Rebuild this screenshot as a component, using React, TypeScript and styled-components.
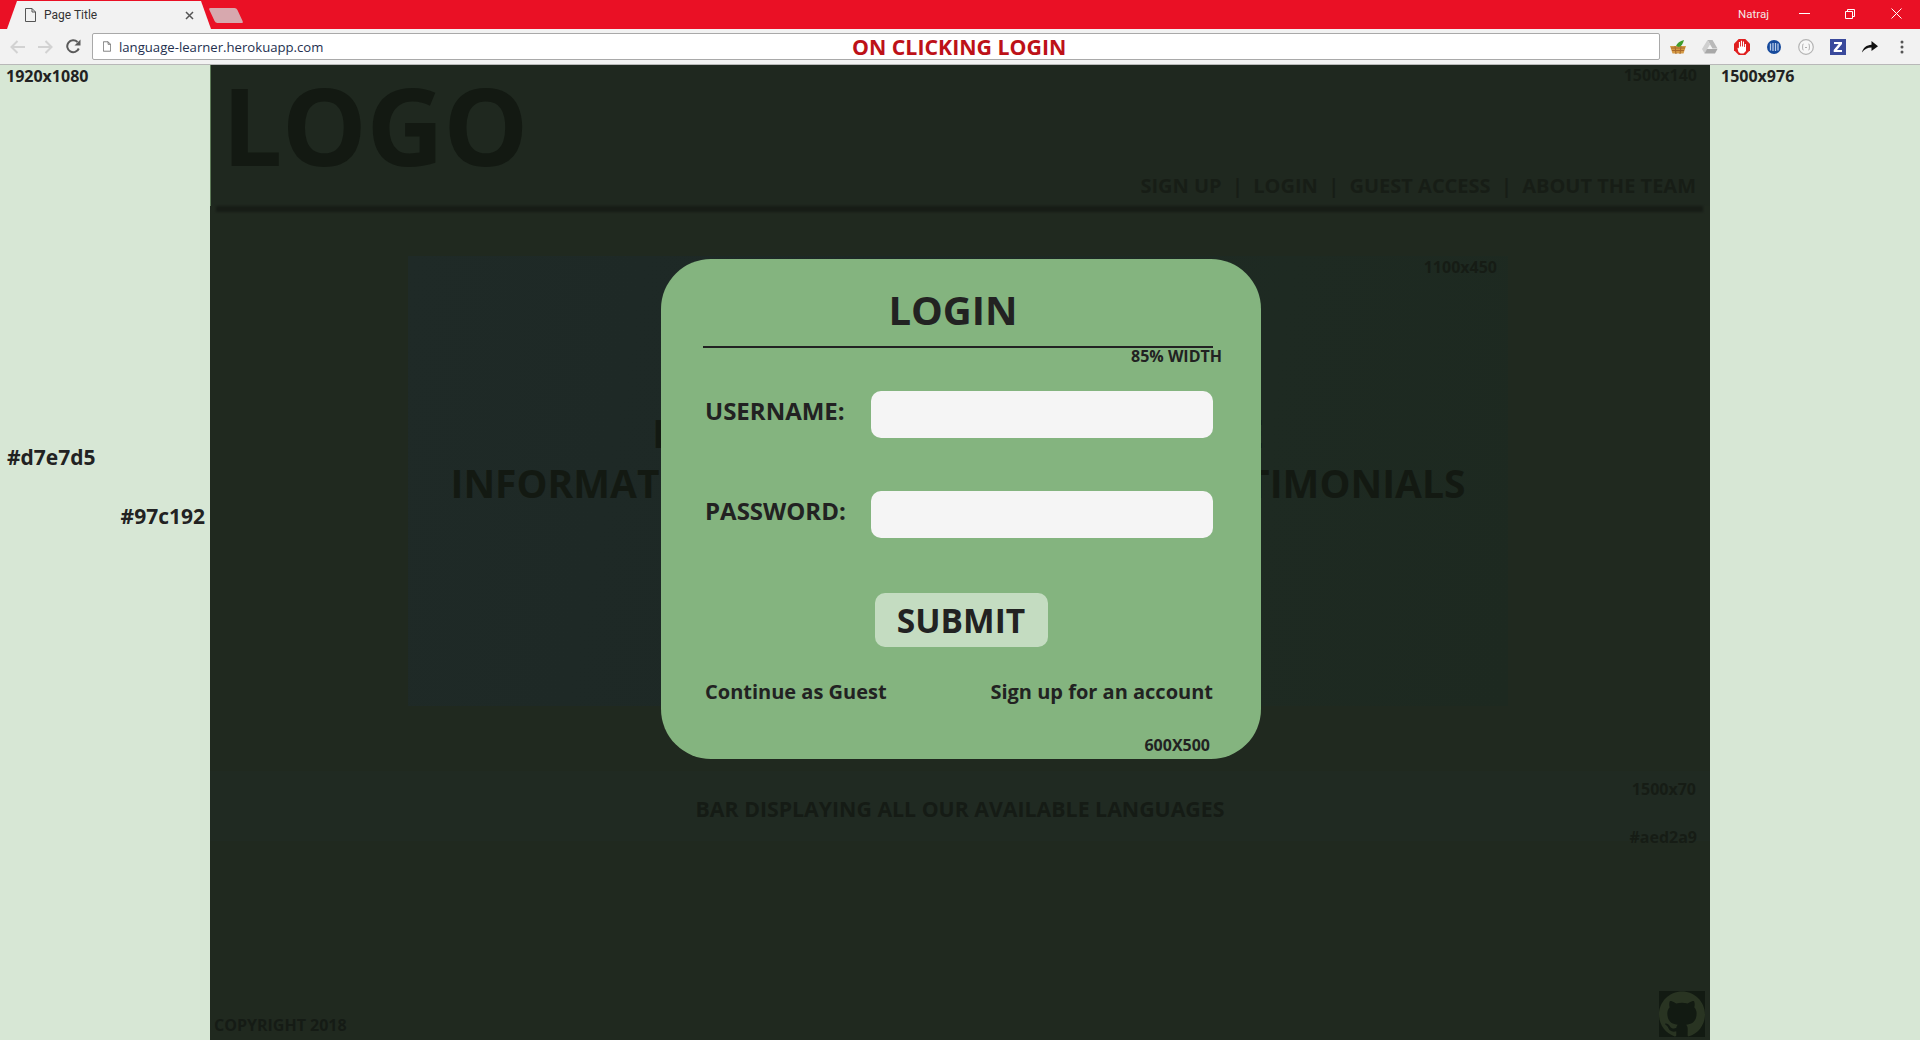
import React from "react";
import styled, { createGlobalStyle } from "styled-components";
import { SiGithub } from "react-icons/si";

const Global = createGlobalStyle`
  html, body { margin: 0; padding: 0; background: #d7e7d5; }
  body { font-family: "Open Sans", "Liberation Sans", sans-serif; }
  * { box-sizing: border-box; }
`;

const Shell = styled.div`
  width: 1920px;
  height: 1040px;
  overflow: hidden;
  display: flex;
  flex-direction: column;
`;

const TabStrip = styled.div`
  height: 29px;
  background: #ea1025;
  display: flex;
  align-items: flex-end;
  padding-left: 7px;
`;

const Tab = styled.div`
  width: 204px;
  height: 28px;
  background: #f2f2f2;
  clip-path: polygon(0 100%, 10px 0, 194px 0, 204px 100%);
  display: flex;
  align-items: center;
  padding: 0 17px 0 18px;
  color: #333;
  font-size: 12px;
`;

const TabTitle = styled.span`
  margin-left: 8px;
  flex: 1;
  font-family: "Roboto", sans-serif;
  font-size: 12px;
`;

const NewTab = styled.div`
  width: 28px;
  height: 15px;
  margin: 0 0 6px 1px;
  background: #d7a8ae;
  border-radius: 2px;
  transform: skewX(25deg);
`;

const WindowArea = styled.div`
  margin-left: auto;
  margin-right: 1px;
  height: 29px;
  display: flex;
  align-items: flex-start;
  color: #fff;
`;

const UserName = styled.span`
  font-family: "Roboto", sans-serif;
  font-size: 11.5px;
  line-height: 28px;
  margin-right: 12px;
  color: #f3e7e7;
`;

const WinButton = styled.div`
  width: 46px;
  height: 27px;
  display: flex;
  align-items: center;
  justify-content: center;
`;

const Toolbar = styled.div`
  height: 36px;
  background: #f2f2f2;
  border-bottom: 1px solid #b8b8b8;
  display: flex;
  align-items: center;
  padding: 0 0 0 10px;
`;

const NavIcons = styled.div`
  width: 82px;
  display: flex;
  align-items: center;
  gap: 13px;
`;

const Omnibox = styled.div`
  width: 1568px;
  height: 27px;
  background: #fff;
  border: 1px solid #a9a9a9;
  border-radius: 2px;
  display: grid;
  grid-template-columns: 749px auto 1fr;
  align-items: center;
  padding-left: 10px;
`;

const UrlCell = styled.div`
  display: flex;
  align-items: center;
  gap: 8px;
  font-size: 13.15px;
  color: #24304f;
  white-space: nowrap;
`;

const Caption = styled.span`
  font-weight: 700;
  font-size: 21.3px;
  line-height: 25px;
  color: #bd1118;
`;

const Extensions = styled.div`
  display: flex;
  align-items: center;
  margin-left: 2px;
`;

const Extension = styled.div`
  width: 32px;
  height: 24px;
  display: flex;
  align-items: center;
  justify-content: center;
`;

const Page = styled.div`
  flex: 1;
  min-height: 0;
  display: grid;
  grid-template-columns: 210px 1500px 210px;
`;

const Side = styled.aside`
  background: #d7e7d5;
  display: flex;
  flex-direction: column;
  color: #222;
`;

const SideNote = styled.span<{ $top: number; $left?: number; $right?: number; $big?: boolean }>`
  display: block;
  margin-top: ${(p) => p.$top}px;
  padding-left: ${(p) => p.$left ?? 0}px;
  padding-right: ${(p) => p.$right ?? 0}px;
  text-align: ${(p) => (p.$right !== undefined ? "right" : "left")};
  font-weight: 700;
  font-size: ${(p) => (p.$big ? 21 : 16)}px;
  line-height: ${(p) => (p.$big ? 28 : 22)}px;
`;

const Center = styled.main`
  position: relative;
  background: #20291f;
  color: #131912;
  overflow: hidden;
`;

const Header = styled.header`
  height: 141px;
  background: #1f281f;
  border-left: 1px solid #5d7a58;
  display: flex;
  flex-direction: column;
  position: relative;
`;

const Logo = styled.div`
  font-weight: 700;
  font-size: 107px;
  line-height: 88px;
  height: 88px;
  margin: 16px 0 0 11px;
  letter-spacing: -0.6px;
`;

const DimNote = styled.span<{ $top: number; $right: number }>`
  position: absolute;
  top: ${(p) => p.$top}px;
  right: ${(p) => p.$right}px;
  font-weight: 700;
  font-size: 16px;
  line-height: 22px;
  color: #161c15;
`;

const SiteNav = styled.nav`
  margin-top: auto;
  margin-bottom: 7px;
  align-self: flex-end;
  padding-right: 14px;
  display: flex;
  gap: 10.3px;
  font-weight: 700;
  font-size: 20px;
  line-height: 27px;
  color: #171d16;
`;

const HeaderShadow = styled.div`
  height: 6px;
  margin: 0 7px 0 6px;
  background: #171c16;
  filter: blur(1px);
`;

const Hero = styled.section`
  position: relative;
  width: 1100px;
  height: 450px;
  margin: 44px 0 0 198px;
  background: linear-gradient(100deg, #1f2a27 0%, #1d2825 40%, #1e2a22 75%, #1d2920 100%);
  padding-top: 152px;
  text-align: center;
  font-weight: 700;
  font-size: 39px;
  line-height: 50px;
  color: #131912;
`;

const LanguageBar = styled.section`
  position: relative;
  height: 70px;
  margin-top: 65px;
  padding-top: 24px;
  text-align: center;
  background: #202a22;
  font-weight: 700;
  font-size: 21.3px;
  line-height: 27px;
  color: #151b15;
`;

const Footer = styled.footer`
  position: absolute;
  left: 4px;
  right: 5px;
  bottom: 3px;
  display: flex;
  align-items: flex-end;
  justify-content: space-between;
`;

const Copyright = styled.span`
  font-weight: 700;
  font-size: 16px;
  line-height: 22px;
  margin-bottom: 1px;
  color: #151b15;
`;

const GithubBadge = styled.div`
  width: 46px;
  height: 46px;
  background: #121a12;
  color: #293422;
  display: flex;
`;

const Backdrop = styled.div`
  position: absolute;
  inset: 0;
  display: flex;
  justify-content: center;
  padding: 194px 0 0 2px;
`;

const Modal = styled.form`
  position: relative;
  width: 600px;
  height: 500px;
  background: #84b47f;
  border-radius: 50px;
  padding: 24px 48px 0 42px;
  color: #222;
  display: flex;
  flex-direction: column;
`;

const ModalTitle = styled.h2`
  margin: 0;
  height: 65px;
  padding-right: 10px;
  border-bottom: 2px solid #222;
  text-align: center;
  font-weight: 700;
  font-size: 40px;
  line-height: 54px;
`;

const WidthNote = styled.span`
  align-self: flex-end;
  margin: -2px -9px 0 0;
  font-weight: 700;
  font-size: 16px;
  line-height: 20px;
`;

const Field = styled.label<{ $top: number }>`
  display: flex;
  align-items: flex-start;
  justify-content: space-between;
  margin-top: ${(p) => p.$top}px;
  padding-left: 2px;
  font-weight: 700;
  font-size: 24px;
  line-height: 40px;
`;

const TextInput = styled.input`
  width: 342px;
  height: 47px;
  border: 0;
  border-radius: 10px;
  background: #f5f5f5;
`;

const SubmitButton = styled.button`
  align-self: center;
  width: 173px;
  height: 54px;
  margin: 55px 0 0 0;
  position: relative;
  left: 3px;
  border: 0;
  border-radius: 10px;
  background: #c4dcc1;
  color: #222;
  font-family: inherit;
  font-weight: 700;
  font-size: 33.5px;
  line-height: 54px;
  padding: 0;
`;

const ModalLinks = styled.div`
  display: flex;
  justify-content: space-between;
  margin-top: 31px;
  padding-left: 2px;
  font-weight: 700;
  font-size: 20px;
  line-height: 28px;
`;

const ModalSize = styled.span`
  position: absolute;
  right: 51px;
  bottom: 3px;
  font-weight: 700;
  font-size: 16px;
  line-height: 22px;
`;

const DocIcon = ({ w = 11, h = 14 }: { w?: number; h?: number }) => (
  <svg width={w} height={h} viewBox="0 0 11 14" fill="none" stroke="#555" strokeWidth="1">
    <path d="M.5.5h6.5l3.5 3.5v9.500h-10zM7 .5v3.500h3.500" />
  </svg>
);

const BasketIcon = () => (
  <svg width="18" height="16" viewBox="0 0 18 16">
    <path d="M1 7h16l-2.500 7.500h-11z" fill="#d59a45" />
    <path d="M2 9h14M3 11.500h12M6 7l1 8M12 7l-1 8" stroke="#a9692a" strokeWidth="1" />
    <path d="M7 7c1-3 4-5 8-6-1 3-2 6-5 7z" fill="#3f9d2c" />
  </svg>
);

const DriveIcon = () => (
  <svg width="16" height="14" viewBox="0 0 16 14">
    <path d="M5.500 0h5l5 8.500h-5z" fill="#b9b9b9" />
    <path d="M5.500 0l-5.500 9 2.500 4.500 5.500-9z" fill="#cfcfcf" />
    <path d="M2.500 13.500h10.500l2.500-4.500h-10.500z" fill="#a8a8a8" />
  </svg>
);

const StopIcon = () => (
  <svg width="16" height="16" viewBox="0 0 16 16">
    <path d="M4.700 0h6.600L16 4.700v6.600L11.300 16H4.700L0 11.300V4.700z" fill="#e01f1f" />
    <path d="M3.500 9.500l1 3.500 2 1.500h3l2.500-2.500V5h-1.200v3H10V2.500H8.900V7.500H8V1.800H6.900v5.700H6V3H4.900v6.500L4 8.500z" fill="#fff" />
  </svg>
);

const StripedIcon = () => (
  <svg width="14" height="14" viewBox="0 0 14 14">
    <circle cx="7" cy="7" r="7" fill="#15499c" />
    <path d="M3.500 3.500v7M6 3v8M8.500 3v8M11 3.500v7" stroke="#b9cdeb" strokeWidth="1.300" />
  </svg>
);

const BracesIcon = () => (
  <svg width="16" height="16" viewBox="0 0 16 16" fill="none">
    <circle cx="8" cy="8" r="7.300" stroke="#b4b4b4" strokeWidth="1.200" fill="#f7f7f7" />
    <path d="M5.500 5c-1 0-.8 1-.8 2s-.7 1-.7 1 .7 0 .7 1-.2 2 .8 2M10.500 5c1 0 .8 1 .8 2s.7 1 .7 1-.7 0-.7 1 .2 2-.8 2M7 8.500h2" stroke="#999" strokeWidth=".8" />
  </svg>
);

const ZIcon = () => (
  <svg width="16" height="16" viewBox="0 0 16 16">
    <rect width="16" height="16" fill="#3a4a9c" />
    <path d="M4 3h8v2l-5 6h5v2H3.700v-2l5-6H4z" fill="#fff" />
  </svg>
);

const ShareIcon = () => (
  <svg width="16" height="12" viewBox="0 0 16 12">
    <path d="M0 11.500C1 7 4.500 4 9.500 3.800V0L16 5.200 9.500 10V6.600C5.500 6.600 2.500 8 0 11.500z" fill="#111" />
  </svg>
);

const DotsIcon = () => (
  <svg width="4" height="14" viewBox="0 0 4 14" fill="#555">
    <circle cx="2" cy="2" r="1.500" />
    <circle cx="2" cy="7" r="1.500" />
    <circle cx="2" cy="12" r="1.500" />
  </svg>
);

export default function App() {
  return (
    <Shell>
      <Global />
      <TabStrip>
        <Tab>
          <DocIcon />
          <TabTitle>Page Title</TabTitle>
          <svg width="9" height="9" viewBox="0 0 9 9" stroke="#555" strokeWidth="1.500">
            <path d="M1 1l7 7M8 1L1 8" />
          </svg>
        </Tab>
        <NewTab />
        <WindowArea>
          <UserName>Natraj</UserName>
          <WinButton>
            <svg width="11" height="1" viewBox="0 0 11 1"><path d="M0 .5h11" stroke="#fff" /></svg>
          </WinButton>
          <WinButton>
            <svg width="10" height="10" viewBox="0 0 10 10" fill="none" stroke="#fff">
              <path d="M.5 2.500h7v7h-7zM2.500 2.500v-2h7v7h-2" />
            </svg>
          </WinButton>
          <WinButton>
            <svg width="11" height="11" viewBox="0 0 11 11" stroke="#fff"><path d="M.5.5l10 10M10.500.5l-10 10" /></svg>
          </WinButton>
        </WindowArea>
      </TabStrip>
      <Toolbar>
        <NavIcons>
          <svg width="15" height="14" viewBox="0 0 15 14" fill="none" stroke="#d2d2d2" strokeWidth="2">
            <path d="M15 7H2M7.500 1L1.500 7l6 6" />
          </svg>
          <svg width="15" height="14" viewBox="0 0 15 14" fill="none" stroke="#d2d2d2" strokeWidth="2">
            <path d="M0 7h13M7.500 1l6 6-6 6" />
          </svg>
          <svg width="15" height="15" viewBox="0 0 15 15" fill="none" stroke="#5a5a5a" strokeWidth="2">
            <path d="M12.800 9.500A6 6 0 1 1 11.500 3" />
            <path d="M14.500 .5v6h-6z" fill="#5a5a5a" stroke="none" />
          </svg>
        </NavIcons>
        <Omnibox>
          <UrlCell>
            <DocIcon w={8} h={11} />
            language-learner.herokuapp.com
          </UrlCell>
          <Caption>ON CLICKING LOGIN</Caption>
          <span />
        </Omnibox>
        <Extensions>
          <Extension><BasketIcon /></Extension>
          <Extension><DriveIcon /></Extension>
          <Extension><StopIcon /></Extension>
          <Extension><StripedIcon /></Extension>
          <Extension><BracesIcon /></Extension>
          <Extension><ZIcon /></Extension>
          <Extension><ShareIcon /></Extension>
          <Extension><DotsIcon /></Extension>
        </Extensions>
      </Toolbar>
      <Page>
        <Side>
          <SideNote $top={0} $left={6}>1920x1080</SideNote>
          <SideNote $top={356} $left={7} $big>#d7e7d5</SideNote>
          <SideNote $top={31} $right={5} $big>#97c192</SideNote>
        </Side>
        <Center>
          <Header>
            <Logo>LOGO</Logo>
            <DimNote $top={-1} $right={13}>1500x140</DimNote>
            <SiteNav>
              <span>SIGN UP</span><span>|</span>
              <span>LOGIN</span><span>|</span>
              <span>GUEST ACCESS</span><span>|</span>
              <span>ABOUT THE TEAM</span>
            </SiteNav>
          </Header>
          <HeaderShadow />
          <Hero>
            <DimNote $top={0} $right={11}>1100x450</DimNote>
            IMAGE CAROUSEL SHOWN HERE
            <br />
            INFORMATION ABOUT THE APPS AND TESTIMONIALS
          </Hero>
          <LanguageBar>
            <DimNote $top={7} $right={14}>1500x70</DimNote>
            BAR DISPLAYING ALL OUR AVAILABLE LANGUAGES
            <DimNote $top={55} $right={13}>#aed2a9</DimNote>
          </LanguageBar>
          <Footer>
            <Copyright>COPYRIGHT 2018</Copyright>
            <GithubBadge><SiGithub size={46} /></GithubBadge>
          </Footer>
          <Backdrop>
            <Modal>
              <ModalTitle>LOGIN</ModalTitle>
              <WidthNote>85% WIDTH</WidthNote>
              <Field $top={25}>
                USERNAME:
                <TextInput type="text" />
              </Field>
              <Field $top={53}>
                PASSWORD:
                <TextInput type="password" />
              </Field>
              <SubmitButton type="button">SUBMIT</SubmitButton>
              <ModalLinks>
                <span>Continue as Guest</span>
                <span>Sign up for an account</span>
              </ModalLinks>
              <ModalSize>600X500</ModalSize>
            </Modal>
          </Backdrop>
        </Center>
        <Side>
          <SideNote $top={0} $left={11}>1500x976</SideNote>
        </Side>
      </Page>
    </Shell>
  );
}
